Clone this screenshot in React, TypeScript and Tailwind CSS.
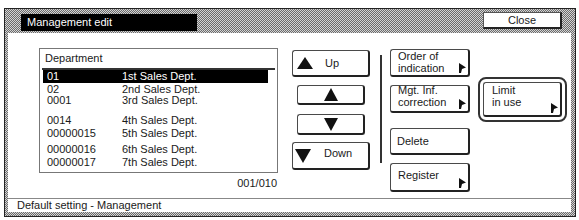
import React from "react";

const hatch =
  "bg-[image:repeating-conic-gradient(#6b6b6b_0%_25%,#d4d4d4_0%_50%)] bg-size-[2px_2px]";

function Tri({ dir, w, h }: { dir: "up" | "down"; w: number; h: number }) {
  const pts = dir === "up" ? `${w / 2},0 ${w},${h} 0,${h}` : `0,0 ${w},0 ${w / 2},${h}`;
  return (
    <svg width={w} height={h} viewBox={`0 0 ${w} ${h}`} className="block shrink-0">
      <polygon points={pts} fill="#111" />
    </svg>
  );
}

function Pointer() {
  return (
    <svg width="7" height="10" viewBox="0 0 7 10" className="absolute right-[2px] bottom-[2px]">
      <polygon points="0,0 7,4.5 3,6 2,10 0,10" fill="#111" />
    </svg>
  );
}

const btn =
  "relative bg-white border border-[#4a4a4a] border-r-2 border-b-2 border-r-[#222] border-b-[#222] rounded-[3px] text-[11px] text-[#1a1a1a]";

const rows: [string, string, string][] = [
  ["02", "2nd Sales Dept.", "mt-[1px] h-[11px] leading-[11px]"],
  ["0001", "3rd Sales Dept.", "mt-[0px] h-[11px] leading-[11px]"],
  ["0014", "4th Sales Dept.", "mt-[9px] h-[10px] leading-[10px]"],
  ["00000015", "5th Sales Dept.", "mt-[3px] h-[10px] leading-[10px]"],
  ["00000016", "6th Sales Dept.", "mt-[6px] h-[10px] leading-[10px]"],
  ["00000017", "7th Sales Dept.", "mt-[3px] h-[10px] leading-[10px]"],
];

export default function App() {
  return (
    <div className="w-[579px] h-[220px] bg-white overflow-hidden font-['Liberation_Sans',Arial,sans-serif] text-[11px] text-[#1a1a1a]">
      <div className="pt-[8px] pl-[4px]">
        <div className={`w-[572px] h-[209px] border border-[#222] ${hatch} flex flex-col`}>
          {/* Title band */}
          <div className="h-[24px] flex items-start shrink-0">
            <div className="ml-[16px] mt-[5px] w-[176px] h-[17px] bg-black text-white leading-[17px] pl-[6px]">
              Management edit
            </div>
            <div className="ml-auto mr-[13px] mt-[3px] w-[79px] h-[17px] bg-white border border-[#555] border-r-2 border-b-2 border-r-[#222] border-b-[#222] flex items-center justify-center leading-none">
              Close
            </div>
          </div>
          {/* Body */}
          <div className="ml-[3px] mr-[4px] mb-[4px] flex-1 bg-white flex flex-col">
            <div className="h-[165px] flex items-start pl-[31px] pt-[15px] shrink-0">
              {/* List column */}
              <div className="w-[239px] flex flex-col">
                <div className="h-[125px] border border-[#777] flex flex-col">
                  <div className="h-[19px] leading-[19px] pl-[5px]">Department</div>
                  <div className="h-[2px] mx-[2px] bg-[#333]" />
                  <div className="ml-[3px] mr-[9px] h-[13px] leading-[13px] bg-black text-white flex pl-[4px]">
                    <span className="w-[75px]">01</span>
                    <span>1st Sales Dept.</span>
                  </div>
                  {rows.map(([a, b, m]) => (
                    <div key={a} className={`ml-[3px] flex pl-[4px] ${m}`}>
                      <span className="w-[75px]">{a}</span>
                      <span>{b}</span>
                    </div>
                  ))}
                </div>
                <div className="mt-[4px] h-[12px] leading-[12px] text-right pr-[1px]">001/010</div>
              </div>
              {/* Up/down column */}
              <div className="ml-[14px] w-[78px] pt-[2px] flex flex-col">
                <div className={`${btn} h-[27px] flex items-center pl-[4px]`}>
                  <Tri dir="up" w={16} h={12} />
                  <span className="ml-[12px]">Up</span>
                </div>
                <div className={`${btn} mt-[8px] mx-[5px] h-[20px] flex items-center justify-center`}>
                  <Tri dir="up" w={14} h={13} />
                </div>
                <div className={`${btn} mt-[9px] mx-[5px] h-[21px] flex items-center justify-center`}>
                  <Tri dir="down" w={14} h={13} />
                </div>
                <div className={`${btn} mt-[7px] h-[28px] flex items-center pl-[2px]`}>
                  <Tri dir="down" w={16} h={14} />
                  <span className="ml-[13px] -mt-[4px]">Down</span>
                </div>
              </div>
              {/* Separator */}
              <div className="ml-[10px] mt-[7px] w-[2px] h-[108px] bg-[#333]" />
              {/* Function column */}
              <div className="ml-[8px] w-[80px] flex flex-col">
                <div className={`${btn} mt-[1px] h-[28px] pl-[7px] leading-[12px]`}>
                  <div>Order of</div>
                  <div>indication</div>
                  <Pointer />
                </div>
                <div className={`${btn} mt-[8px] h-[28px] pl-[7px] leading-[12px]`}>
                  <div className="-mt-[2px]">Mgt. Inf.</div>
                  <div>correction</div>
                  <Pointer />
                </div>
                <div className={`${btn} mt-[15px] h-[27px] pl-[6px] flex items-center`}>Delete</div>
                <div className={`${btn} mt-[8px] h-[29px] pl-[7px] pt-[5px] leading-[12px]`}>
                  Register
                  <Pointer />
                </div>
              </div>
              {/* Limit in use */}
              <div className="ml-[8px] mt-[29px] w-[89px] h-[45px] rounded-[8px] border-2 border-[#333] p-[3px]">
                <div className={`${btn} h-[35px] pl-[8px] pt-[1px] leading-[12px]`}>
                  <div>Limit</div>
                  <div>in use</div>
                  <Pointer />
                </div>
              </div>
            </div>
            <div className="border-t border-[#888] flex-1 pl-[9px] leading-[13px]">
              Default setting - Management
            </div>
          </div>
        </div>
      </div>
    </div>
  );
}
